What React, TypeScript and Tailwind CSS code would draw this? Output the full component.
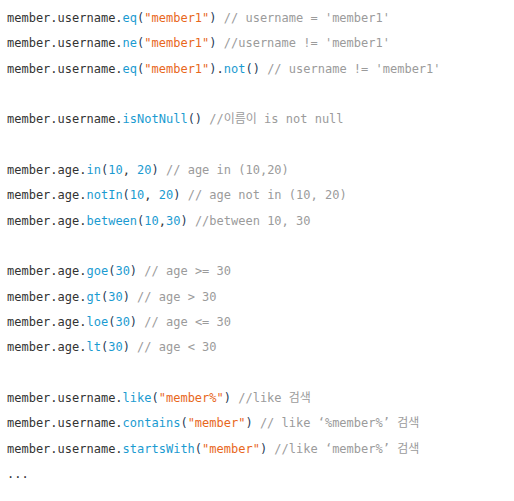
type Tok = [string, string];

const B = "text-[#333333]"; // base
const M = "text-[#1b9bd1]"; // method / number
const S = "text-[#e8671c]"; // string
const P = "text-[#1f3b57]"; // parens
const C = "text-[#9b9b9b]"; // comment

const lines: (Tok[] | null)[] = [
  [["member.username.", B], ["eq", M], ["(", P], ['"member1"', S], [")", P], [" // username = 'member1'", C]],
  [["member.username.", B], ["ne", M], ["(", P], ['"member1"', S], [")", P], [" //username != 'member1'", C]],
  [["member.username.", B], ["eq", M], ["(", P], ['"member1"', S], [")", P], [".", B], ["not", M], ["()", P], [" // username != 'member1'", C]],
  null,
  [["member.username.", B], ["isNotNull", M], ["()", P], [" //이름이 is not null", C]],
  null,
  [["member.age.", B], ["in", M], ["(", P], ["10", M], [", ", B], ["20", M], [")", P], [" // age in (10,20)", C]],
  [["member.age.", B], ["notIn", M], ["(", P], ["10", M], [", ", B], ["20", M], [")", P], [" // age not in (10, 20)", C]],
  [["member.age.", B], ["between", M], ["(", P], ["10", M], [",", B], ["30", M], [")", P], [" //between 10, 30", C]],
  null,
  [["member.age.", B], ["goe", M], ["(", P], ["30", M], [")", P], [" // age >= 30", C]],
  [["member.age.", B], ["gt", M], ["(", P], ["30", M], [")", P], [" // age > 30", C]],
  [["member.age.", B], ["loe", M], ["(", P], ["30", M], [")", P], [" // age <= 30", C]],
  [["member.age.", B], ["lt", M], ["(", P], ["30", M], [")", P], [" // age < 30", C]],
  null,
  [["member.username.", B], ["like", M], ["(", P], ['"member%"', S], [")", P], [" //like 검색", C]],
  [["member.username.", B], ["contains", M], ["(", P], ['"member"', S], [")", P], [" // like ‘%member%’ 검색", C]],
  [["member.username.", B], ["startsWith", M], ["(", P], ['"member"', S], [")", P], [" //like ‘member%’ 검색", C]],
  [["...", B]],
];

export default function App() {
  return (
    <div className="w-[514px] h-[501px] bg-white overflow-hidden">
      <pre className="pl-[7px] pt-[6px] m-0 text-[12px] leading-[25.33px] font-['DejaVu_Sans_Mono','Noto_Sans_CJK_KR',monospace]">
        {lines.map((l, i) => (
          <div key={i} className="h-[25.33px] whitespace-pre">
            {l
              ? l.map(([t, c], j) => (
                  <span key={j} className={c}>
                    {t}
                  </span>
                ))
              : " "}
          </div>
        ))}
      </pre>
    </div>
  );
}
